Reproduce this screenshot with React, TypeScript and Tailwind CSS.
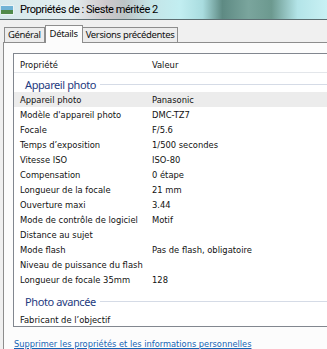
import React from "react";

const rows: [string, string][] = [
  ["Appareil photo", "Panasonic"],
  ["Modèle d'appareil photo", "DMC-TZ7"],
  ["Focale", "F/5.6"],
  ["Temps d’exposition", "1/500 secondes"],
  ["Vitesse ISO", "ISO-80"],
  ["Compensation", "0 étape"],
  ["Longueur de la focale", "21 mm"],
  ["Ouverture maxi", "3.44"],
  ["Mode de contrôle de logiciel", "Motif"],
  ["Distance au sujet", ""],
  ["Mode flash", "Pas de flash, obligatoire"],
  ["Niveau de puissance du flash", ""],
  ["Longueur de focale 35mm", "128"],
];

function Row({ name, value, selected }: { name: string; value: string; selected?: boolean }) {
  return (
    <div className={`flex h-[15px] items-center ${selected ? "bg-[#ececec]" : ""}`}>
      <div className="w-[132px] shrink-0 pl-[6px] whitespace-nowrap">{name}</div>
      <div className="pl-[6px] whitespace-nowrap">{value}</div>
    </div>
  );
}

function Group({ label, className }: { label: string; className: string }) {
  return (
    <div className={`flex items-center pl-[11px] ${className}`}>
      <span className="text-[11px] tracking-[-0.4px] text-[#1e3a80] font-['Noto_Sans',sans-serif] leading-none">{label}</span>
      <div className="ml-[4px] h-px flex-1 bg-[#d5dbe6]" />
    </div>
  );
}

export default function App() {
  return (
    <div className="w-[327px] h-[349px] overflow-hidden bg-[#f0f0f0] font-['DejaVu_Sans_Condensed','DejaVu_Sans',sans-serif] text-[9.3px] text-[#111]">
      {/* title bar */}
      <div className="flex h-[20px] items-center border-b border-[#5d6e72] bg-[linear-gradient(90deg,#d6e9ec_0%,#e4eef0_22%,#cfc9cc_32%,#bcc4c6_38%,#c4e4e7_46%,#c2eef1_55%,#a9dcdf_62%,#5e8a83_68%,#7aa59d_76%,#6c998f_83%,#b3e4e8_91%,#c9f1f4_100%)]">
        <svg width="13" height="10" viewBox="0 0 13 10" className="ml-[1px]">
          <rect x="0" y="0" width="13" height="10" fill="#e9f3f6" />
          <rect x="0" y="1" width="12" height="4" fill="#6fb3d6" />
          <rect x="0" y="5" width="12" height="4" fill="#4f8a4a" />
        </svg>
        <span className="ml-[6px] text-[11px] tracking-[-0.45px] font-['Roboto',sans-serif] text-black leading-none">
          Propriétés de : Sieste méritée 2
        </span>
      </div>

      {/* tabs */}
      <div className="flex h-[22px] items-end pl-[4px] font-['Noto_Sans',sans-serif] text-[9.5px] tracking-[-0.35px]">
        <div className="h-[15px] flex items-center border border-b-0 border-[#8d8d8d] bg-[#ececec] px-[3px]">
          Général
        </div>
        <div className="h-[18px] mb-[-1px] relative z-10 flex items-start pt-[1px] border border-b-0 border-[#8d8d8d] bg-[#fcfcfc] px-[4px]">
          Détails
        </div>
        <div className="h-[15px] flex items-center border border-b-0 border-l-0 border-[#8d8d8d] bg-[#ececec] px-[3px]">
          Versions précédentes
        </div>
      </div>

      {/* tab panel */}
      <div className="ml-[3px] h-[307px] border-t border-l border-[#8d8d8d] bg-[#fcfcfc] pt-[10px] pl-[9px]">
        <div className="h-[274px] border border-r-0 border-[#82878f] bg-white">
          <div className="flex h-[19px] items-end border-b border-[#e3e6ea] leading-[14px]">
            <div className="w-[132px] pl-[6px]">Propriété</div>
            <div className="pl-[6px]">Valeur</div>
          </div>
          <Group label="Appareil photo" className="h-[19px] pt-[3px]" />
          {rows.map(([n, v], i) => (
            <Row key={n} name={n} value={v} selected={i === 0} />
          ))}
          <Group label="Photo avancée" className="h-[25px] pt-[4px]" />
          <Row name="Fabricant de l’objectif" value="" />
        </div>
        <div className="mt-[10px] pl-[1px] text-[9.2px] text-[#1664b4] underline whitespace-nowrap">
          Supprimer les propriétés et les informations personnelles
        </div>
      </div>
    </div>
  );
}
